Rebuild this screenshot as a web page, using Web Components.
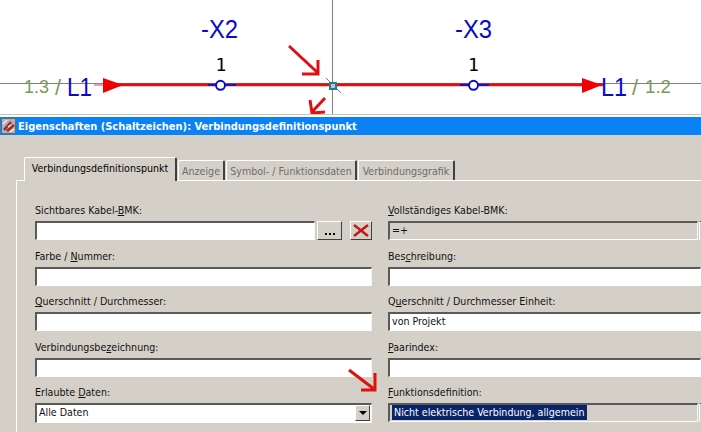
<!DOCTYPE html>
<html>
<head>
<meta charset="utf-8">
<title>Eigenschaften</title>
<style>
    html, body { margin: 0; padding: 0; background: #d4d0c8; }
    body { width: 701px; height: 432px; overflow: hidden; position: relative; font: 10.6px "DejaVu Sans Condensed", "DejaVu Sans", sans-serif; }
</style>
</head>
<body>
<schematic-view></schematic-view>
<props-dialog title="Eigenschaften (Schaltzeichen): Verbindungsdefinitionspunkt">
    <dialog-tabs></dialog-tabs>
    <form-grid>
        <form-field before="Sichtbares Kabel-" key="B" after="MK:" buttons></form-field>
        <form-field key="V" after="ollständiges Kabel-BMK:" value="=+" readonly></form-field>
        <form-field before="Farbe / " key="N" after="ummer:"></form-field>
        <form-field before="Bes" key="c" after="hreibung:" open-right></form-field>
        <form-field key="Q" after="uerschnitt / Durchmesser:"></form-field>
        <form-field before="Q" key="u" after="erschnitt / Durchmesser Einheit:" value="von Projekt" open-right></form-field>
        <form-field before="Verbindungsbe" key="z" after="eichnung:"></form-field>
        <form-field key="P" after="aarindex:" open-right></form-field>
        <form-field before="Erlaubte " key="D" after="aten:" value="Alle Daten" combo></form-field>
        <form-field key="F" after="unktionsdefinition:" value="Nicht elektrische Verbindung, allgemein" readonly selected></form-field>
    </form-grid>
</props-dialog>
<red-arrow></red-arrow>
<script>
class SchematicView extends HTMLElement {
    constructor() {
        super();
        this.attachShadow({mode: 'open'}).innerHTML = `
<style>
    :host { display: block; height: 117px; background: #fff; }
    svg { display: block; border-bottom: 1px solid #c9c5bd; }
    text { font-family: "Liberation Sans", Arial, sans-serif; }
    .name { font-size: 26px; fill: #0a0ac8; }
    .num { font-family: "DejaVu Sans Mono", monospace; font-size: 18px; fill: #000; }
    .ref { font-size: 19px; fill: #7b9a5a; }
    .slash { font-size: 22px; fill: #7b9a5a; }
</style>
<svg width="701" height="114" viewBox="0 0 701 114">
    <line x1="0" y1="83.5" x2="701" y2="83.5" stroke="#808080"/>
    <line x1="332.5" y1="0" x2="332.5" y2="114" stroke="#808080"/>
    <line x1="94" y1="85" x2="104" y2="85" stroke="#f04040"/>
    <line x1="104" y1="84.7" x2="604" y2="84.7" stroke="#e01010" stroke-width="3"/>
    <path d="M103 78 L123 85 L103 93Z" fill="#f00000"/>
    <path d="M582 78 L602 85 L582 93Z" fill="#f00000"/>
    <line x1="208" y1="85" x2="236" y2="85" stroke="#1414c8" stroke-width="2"/>
    <circle cx="220.5" cy="85.3" r="4.5" fill="#fff" stroke="#0a0ac8" stroke-width="2"/>
    <line x1="460" y1="85" x2="489" y2="85" stroke="#1414c8" stroke-width="2"/>
    <circle cx="473.5" cy="85.3" r="4.5" fill="#fff" stroke="#0a0ac8" stroke-width="2"/>
    <line x1="326" y1="78" x2="341" y2="93" stroke="#4a8a9a"/>
    <rect x="330" y="83" width="6" height="6" fill="#a8d0d8" stroke="#2a7a90" stroke-width="2"/>
    <text class="name" x="201" y="38" textLength="37" lengthAdjust="spacingAndGlyphs">-X2</text>
    <text class="name" x="455" y="38" textLength="37" lengthAdjust="spacingAndGlyphs">-X3</text>
    <text class="num" x="215.6" y="71">1</text>
    <text class="num" x="468" y="71">1</text>
    <text class="ref" x="24" y="93" textLength="25" lengthAdjust="spacingAndGlyphs">1.3</text>
    <text class="slash" x="55" y="95">/</text>
    <text class="name" x="67" y="96" textLength="25" lengthAdjust="spacingAndGlyphs">L1</text>
    <text class="name" x="601" y="96" textLength="26" lengthAdjust="spacingAndGlyphs">L1</text>
    <text class="slash" x="632" y="95">/</text>
    <text class="ref" x="645" y="93" textLength="26" lengthAdjust="spacingAndGlyphs">1.2</text>
    <g fill="none" stroke="#e01010" stroke-width="3">
        <path d="M289 46 L318 73 M302 74 L318 74 L318 60"/>
        <path d="M325 98 L312 112 M310 100 L312 113 L325 112"/>
    </g>
</svg>
<svg width="701" height="2" style="border:0"></svg>`;
    }
}

class RedArrow extends HTMLElement {
    constructor() {
        super();
        this.attachShadow({mode: 'open'}).innerHTML = `
<style>
    :host { position: absolute; left: 345px; top: 366px; width: 34px; height: 28px; }
    svg { display: block; }
</style>
<svg width="34" height="28" viewBox="0 0 34 28" fill="none" stroke="#e01010" stroke-width="3">
    <path d="M4 4 L29 23 M16 24 L30 24 L30 7"/>
</svg>`;
    }
}

class PropsDialog extends HTMLElement {
    constructor() {
        super();
        this.attachShadow({mode: 'open'}).innerHTML = `
<style>
    :host { display: block; background: #d4d0c8; height: 315px; overflow: hidden; }
    .title { height: 18px; background: #0a82f5; color: #fff; display: flex; align-items: center; gap: 2px; padding-left: 1px; font: bold 11px "DejaVu Sans Condensed", "DejaVu Sans", sans-serif; }
    .body { padding: 22px 0 0 16px; }
</style>
<div class="title">
    <svg width="15" height="16" viewBox="0 0 15 16">
        <rect x="0.5" y="0.5" width="14" height="15" fill="#b4b0b4" stroke="#5f6a80"/>
        <path d="M3 12 L10 4 M6 13 L13 7" stroke="#a82828" stroke-width="2.6"/>
        <path d="M2 6 L6 2 M9 14 L13 11 M7 9 L10 7" stroke="#f4f0f0" stroke-width="1.4"/>
    </svg>
    <span id="t"></span>
</div>
<div class="body"><slot></slot></div>`;
    }

    connectedCallback() {
        this.shadowRoot.querySelector('#t').textContent = this.getAttribute('title');
    }
}

class DialogTabs extends HTMLElement {
    constructor() {
        super();
        const tabs = ['Verbindungsdefinitionspunkt', 'Anzeige', 'Symbol- / Funktionsdaten', 'Verbindungsgrafik'];
        const widths = [153, 47, 131, 97];
        this.attachShadow({mode: 'open'}).innerHTML = `
<style>
    :host { display: flex; align-items: flex-end; gap: 1px; height: 23px; padding-left: 8px; border-bottom: 1px solid #fff; font: 10.6px "DejaVu Sans Condensed", "DejaVu Sans", sans-serif; }
    .tab { box-sizing: border-box; height: 20px; background: #d4d0c8; color: #6e6c66; border: 1px solid #fff; border-bottom: 0; border-right: 2px solid #404040; border-radius: 2px 2px 0 0; display: flex; align-items: center; justify-content: center; white-space: nowrap; }
    .tab.on { height: 24px; margin-bottom: -1px; color: #000; padding-bottom: 3px; position: relative; }
</style>
${tabs.map((t, i) => `<div class="tab${i ? '' : ' on'}" style="width:${widths[i]}px">${t}</div>`).join('')}`;
    }
}

class FormGrid extends HTMLElement {
    constructor() {
        super();
        this.attachShadow({mode: 'open'}).innerHTML = `
<style>
    :host { display: grid; grid-template-columns: 337px 313px; column-gap: 16px; grid-auto-rows: 45.5px; padding: 24px 0 0 18px; border-left: 1px solid #fff; height: 260px; }
</style>
<slot></slot>`;
    }
}

class FormField extends HTMLElement {
    connectedCallback() {
        if (this.shadowRoot) return;
        const a = n => this.getAttribute(n) || '';
        const has = n => this.hasAttribute(n);
        const box = 'box' + (has('readonly') ? ' ro' : '') + (has('open-right') ? ' open' : '') + (has('combo') ? ' combo' : '');
        const value = has('selected') ? `<mark>${a('value')}</mark>` : a('value');
        this.attachShadow({mode: 'open'}).innerHTML = `
<style>
    :host { display: block; font: 10.6px "DejaVu Sans Condensed", "DejaVu Sans", sans-serif; color: #101010; }
    label { display: block; height: 16px; line-height: 11px; }
    .row { display: flex; }
    .box { flex: 1; box-sizing: border-box; height: 19px; background: #fff; border: 2px solid; border-bottom-width: 1px; border-right-width: 1px; border-color: #5a5a5a #f4f4f0 #fff #5a5a5a; line-height: 15px; padding-left: 2px; white-space: nowrap; overflow: hidden; display: flex; }
    .ro { background: #d4d0c8; }
    .combo { height: 20px; }
    .open { border-right-color: #fff; }
    .txt { flex: 1; }
    mark { background: #0a246a; color: #fff; padding: 0 2px 0 2px; display: inline-block; }
    .btn { box-sizing: border-box; width: 25px; height: 19px; margin-left: 2px; background: #d4d0c8; border: 1px solid; border-color: #fff #404040 #404040 #fff; color: #000; display: flex; align-items: flex-end; justify-content: center; gap: 2px; padding-bottom: 4px; }
    .btn i { width: 2px; height: 2px; background: #000; }
    .x { width: 22px; margin-left: 8px; align-items: center; padding: 0; }
    .arrow { width: 15px; height: 16px; margin: 0 1px 0 0; box-sizing: border-box; background: #d4d0c8; border: 1px solid; border-color: #fff #404040 #404040 #fff; display: flex; align-items: center; justify-content: center; }
    .arrow i { border: 4px solid transparent; border-top: 4px solid #000; border-bottom: 0; }
    .sliver { width: 2px; margin-left: 1px; height: 19px; border-left: 1px solid #fff; border-top: 1px solid #5a5a5a; box-sizing: border-box; }
</style>
<label>${a('before')}${a('key') ? `<u>${a('key')}</u>` : ''}${a('after')}</label>
<div class="row">
    <div class="${box}">
        <span class="txt">${value}</span>
        ${has('combo') ? '<span class="arrow"><i></i></span>' : ''}
    </div>
    ${has('readonly') ? '<div class="sliver"></div>' : ''}
    ${has('buttons') ? `<div class="btn"><i></i><i></i><i></i></div>
    <div class="btn x"><svg width="16" height="13" viewBox="0 0 16 13"><path d="M1 1 L15 12 M15 1 L1 12" stroke="#c01818" stroke-width="2.4"/></svg></div>` : ''}
</div>`;
    }
}

customElements.define('schematic-view', SchematicView);
customElements.define('red-arrow', RedArrow);
customElements.define('props-dialog', PropsDialog);
customElements.define('dialog-tabs', DialogTabs);
customElements.define('form-grid', FormGrid);
customElements.define('form-field', FormField);
</script>
</body>
</html>
